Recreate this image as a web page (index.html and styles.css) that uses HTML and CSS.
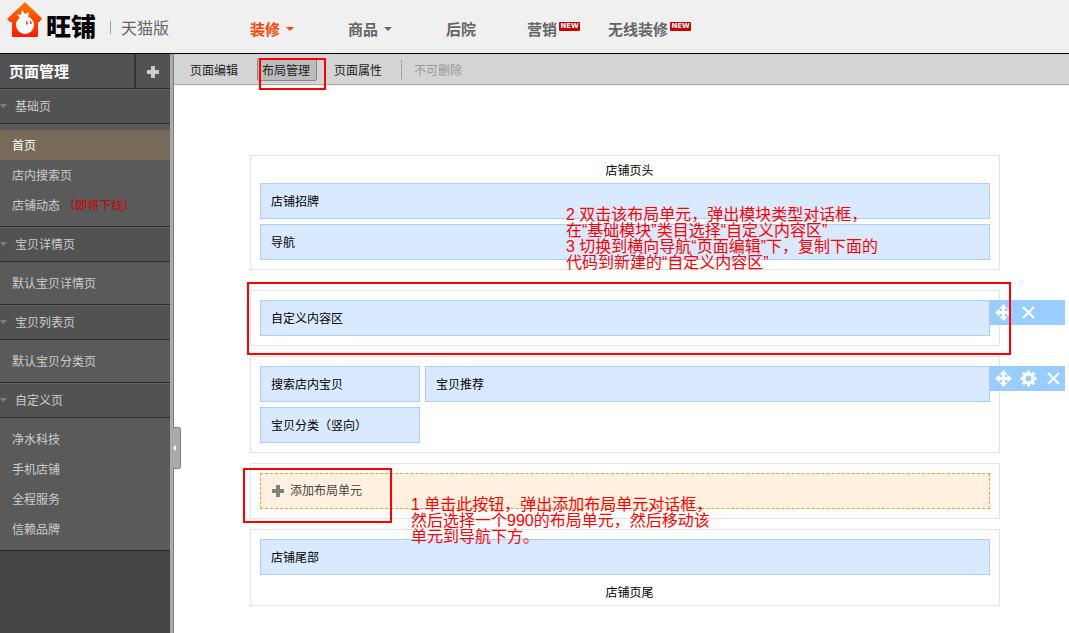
FILE: index.html
```html
<!DOCTYPE html>
<html lang="zh-CN">
<head>
<meta charset="utf-8">
<title>旺铺 天猫版</title>
<link rel="stylesheet" href="styles.css">
</head>
<body>
<svg class="defs" width="0" height="0" aria-hidden="true">
  <symbol id="i-plus" viewBox="0 0 12 12"><path d="M4 0h4v4h4v4H8v4H4V8H0V4h4z"/></symbol>
  <symbol id="i-move" viewBox="0 0 17 17"><path d="M8.500 0l4 4.500h-2.500V7h2.500V4.500L17 8.500l-4.500 4V10H10v2.500h2.500L8.500 17l-4-4.500H7V10H4.500v2.500L0 8.500l4.500-4V7H7V4.500H4.500z"/></symbol>
  <symbol id="i-close" viewBox="0 0 17 17"><path d="M3 3l11 11M14 3L3 14" fill="none" stroke="currentColor" stroke-width="2.200"/></symbol>
  <symbol id="i-gear" viewBox="0 0 17 17"><circle cx="8.500" cy="8.500" r="4.600" fill="none" stroke="currentColor" stroke-width="3.200"/><path d="M8.500 .5v3M8.500 13.500v3M.5 8.500h3M13.500 8.500h3M2.800 2.800l2 2M12.200 12.200l2 2M2.800 14.200l2-2M12.200 4.800l2-2" fill="none" stroke="currentColor" stroke-width="3"/></symbol>
</svg>

<header class="header">
  <div class="brand">
    <svg class="logo" viewBox="0 0 36 36" role="img" aria-label="旺铺">
      <defs><linearGradient id="house" x1="0" y1="0" x2="0" y2="1"><stop offset="0" stop-color="#ff7800"/><stop offset="1" stop-color="#ff1a00"/></linearGradient></defs>
      <path fill="url(#house)" d="M18 0L35 16.500 32.500 20H31v14q0 1-1 1H6q-1 0-1-1V20H3L0 17z"/>
      <circle cx="18" cy="23" r="9" fill="#fff"/>
      <path fill="#fff" d="M13 16l-3-4 4 1 1-5 3 4 4-2-1 5z"/>
      <path d="M19.500 19.500l.7 3M23.500 19l.5 3" stroke="#e32" stroke-width="1.500" fill="none"/>
    </svg>
    <strong class="name">旺铺</strong>
    <span class="edition">天猫版</span>
  </div>
  <nav class="nav">
    <a class="active" href="#">装修<i class="caret"></i></a>
    <a href="#">商品<i class="caret"></i></a>
    <a href="#">后院</a>
    <a href="#">营销<span class="new">NEW</span></a>
    <a href="#">无线装修<span class="new">NEW</span></a>
  </nav>
</header>

<div class="body">
  <aside class="sidebar">
    <div class="side-title">
      <h1>页面管理</h1>
      <button type="button" aria-label="添加页面"><svg class="plus"><use href="#i-plus"/></svg></button>
    </div>
    <h2 class="group">基础页</h2>
    <ul class="pages">
      <li class="current"><a href="#">首页</a></li>
      <li><a href="#">店内搜索页</a></li>
      <li><a href="#">店铺动态 <span class="soon">（即将下线）</span></a></li>
    </ul>
    <h2 class="group">宝贝详情页</h2>
    <ul class="pages"><li><a href="#">默认宝贝详情页</a></li></ul>
    <h2 class="group">宝贝列表页</h2>
    <ul class="pages"><li><a href="#">默认宝贝分类页</a></li></ul>
    <h2 class="group">自定义页</h2>
    <ul class="pages">
      <li><a href="#">净水科技</a></li>
      <li><a href="#">手机店铺</a></li>
      <li><a href="#">全程服务</a></li>
      <li><a href="#">信赖品牌</a></li>
    </ul>
  </aside>
  <div class="rail"><button class="handle" type="button" aria-label="收起"></button></div>

  <main class="main">
    <div class="toolbar">
      <button type="button">页面编辑</button>
      <button type="button" class="pressed">布局管理<span class="mark mark-tab"></span></button>
      <button type="button">页面属性</button>
      <span class="locked">不可删除</span>
    </div>

    <div class="canvas">
      <section class="block block-head">
        <h3>店铺页头</h3>
        <div class="cell">店铺招牌</div>
        <div class="cell">导航</div>
        <p class="note note-head">2 双击该布局单元，弹出模块类型对话框，<br>在“基础模块”类目选择“自定义内容区”<br>3 切换到横向导航“页面编辑”下，复制下面的<br>代码到新建的“自定义内容区”</p>
      </section>

      <section class="block">
        <div class="cell">自定义内容区</div>
        <div class="tools">
          <button type="button" aria-label="移动"><svg><use href="#i-move"/></svg></button>
          <button type="button" aria-label="删除"><svg><use href="#i-close"/></svg></button>
        </div>
        <span class="mark mark-custom"></span>
      </section>

      <section class="block columns">
        <div class="col">
          <div class="cell">搜索店内宝贝</div>
          <div class="cell">宝贝分类（竖向）</div>
        </div>
        <div class="col">
          <div class="cell">宝贝推荐</div>
        </div>
        <div class="tools">
          <button type="button" aria-label="移动"><svg><use href="#i-move"/></svg></button>
          <button type="button" aria-label="设置"><svg><use href="#i-gear"/></svg></button>
          <button type="button" aria-label="删除"><svg><use href="#i-close"/></svg></button>
        </div>
      </section>

      <section class="block block-add">
        <button class="cell add" type="button"><svg class="plus"><use href="#i-plus"/></svg>添加布局单元</button>
        <span class="mark mark-add"></span>
        <p class="note note-add">1 单击此按钮，弹出添加布局单元对话框，<br>然后选择一个990的布局单元，然后移动该<br>单元到导航下方。</p>
      </section>

      <section class="block block-foot">
        <div class="cell">店铺尾部</div>
        <h3>店铺页尾</h3>
      </section>
    </div>
  </main>
</div>
</body>
</html>
```
FILE: styles.css
```css
*, *::before { box-sizing: border-box; }

body {
  margin: 0;
  min-height: 100vh;
  display: flex;
  flex-direction: column;
  background: #fff;
  color: #000;
  font: 12px/18px "Liberation Sans", "Noto Sans CJK SC", sans-serif;
}

h1, h2, h3, p, ul { margin: 0; padding: 0; font-weight: normal; }
ul { list-style: none; }
a { color: inherit; text-decoration: none; }
button { border: 0; padding: 0; background: none; color: inherit; font: inherit; }
svg { display: block; fill: currentColor; }
.defs { position: absolute; }
.plus { width: 12px; height: 12px; }

/* Header */
.header {
  display: flex;
  height: 54px;
  background: #f0f0f0;
  border-bottom: 1px solid #000;
}
.brand { display: flex; width: 250px; padding: 2px 0 0 7px; }
.logo { width: 36px; height: 36px; }
.name { margin: 7px 0 0 3px; font-size: 25px; line-height: 36px; font-weight: 900; }
.edition {
  margin: 19px 0 0 14px;
  padding-left: 10px;
  height: 13px;
  border-left: 1px solid #999;
  color: #666;
  font-size: 16px;
  line-height: 15px;
}
.nav {
  display: flex;
  padding-top: 20px;
  color: #666;
  font-size: 15px;
  font-weight: bold;
  line-height: 20px;
}
.nav a { display: flex; margin-right: 51px; }
.nav a:nth-child(1), .nav a:nth-child(2) { margin-right: 54px; }
.nav a:nth-child(4) { margin-right: 28px; }
.nav .active { color: #f40; }
.caret {
  margin: 7px 0 0 6px;
  height: 4px;
  border: 4px solid transparent;
  border-top-color: currentColor;
  border-bottom: 0;
}
.new {
  width: 21px;
  height: 9px;
  margin: 2px 0 0 2px;
  border-radius: 1px;
  background: #c00;
  color: #fff;
  font: bold 7px/9px "DejaVu Sans", sans-serif;
  text-align: center;
}

/* Sidebar */
.body { display: flex; flex: 1; }
.sidebar { flex: 0 0 170px; background: #444; color: #ccc; }
.side-title {
  display: flex;
  height: 35px;
  background: #525252;
  border-bottom: 1px solid #2a2a2a;
}
.side-title h1 {
  flex: 1;
  padding-left: 9px;
  border-right: 2px solid #333;
  color: #fff;
  font-size: 15px;
  font-weight: bold;
  line-height: 35px;
}
.side-title button { width: 34px; padding: 2px 0 0 11px; }
.group {
  display: flex;
  align-items: center;
  gap: 8px;
  height: 35px;
  background: #525252;
  border-top: 1px solid #626262;
  border-bottom: 1px solid #2a2a2a;
  font-size: 12px;
}
.group::before {
  content: "";
  width: 7px;
  margin-bottom: 2px;
  border-top: 4px solid #808080;
  border-right: 4px solid transparent;
  border-left: 3px solid transparent;
}
.pages { padding: 6px 0; background: #5a5a5a; border-bottom: 1px solid #2a2a2a; }
.pages a { display: block; height: 30px; padding-left: 12px; line-height: 32px; }
.current { background: #786a58; color: #fff; }
.soon { color: #d00000; }
.rail {
  position: relative;
  flex: 0 0 4px;
  background: #aaa;
  border-right: 1px solid #808080;
}
.handle {
  position: absolute;
  top: 373px;
  left: 3px;
  width: 8px;
  height: 42px;
  background: #aaa;
  border: 1px solid #808080;
  border-left: 0;
  border-radius: 0 3px 3px 0;
}
.handle::before {
  content: "";
  display: block;
  width: 3px;
  border: 3px solid transparent;
  border-left: 0;
  border-right-color: #fff;
}

/* Toolbar */
.main { flex: 1; min-width: 0; }
.toolbar {
  display: flex;
  align-items: flex-start;
  height: 32px;
  padding: 4px 0 0 16px;
  background: #d4d4d4;
  border-bottom: 1px solid #eee;
  box-shadow: inset 0 -1px #aaa;
  color: #222;
  line-height: 26px;
}
.toolbar .pressed {
  position: relative;
  width: 60px;
  height: 23px;
  margin: 0 17px 0 19px;
  padding: 0 6px 0 4px;
  border: 1px solid #888;
  border-radius: 2px;
  background: #bbb;
  line-height: 24px;
}
.locked {
  height: 19px;
  margin-left: 19px;
  margin-top: 2px;
  padding-left: 12px;
  border-left: 1px dotted #777;
  color: #999;
  line-height: 22px;
}

/* Layout canvas */
.canvas {
  display: flex;
  flex-direction: column;
  gap: 10px;
  padding: 69px 69px 27px 76px;
}
.block {
  position: relative;
  display: flex;
  flex-direction: column;
  gap: 5px;
  padding: 9px;
  border: 1px solid #e4e4e4;
}
.block h3 { padding-left: 9px; font-size: 12px; text-align: center; }
.block-head { gap: 0; margin-bottom: 10px; padding-top: 0; }
.block-head h3 { height: 27px; line-height: 30px; }
.block-head .cell + .cell { margin-top: 5px; }
.block-foot { gap: 4px; padding-bottom: 0; }
.block-foot h3 { height: 26px; line-height: 28px; }
.cell {
  height: 36px;
  padding-left: 10px;
  background: #d9e9ff;
  border: 1px solid #aad0ff;
  line-height: 37px;
}
.columns { flex-direction: row; }
.col { display: flex; flex: 1; flex-direction: column; gap: 5px; }
.col:first-child { flex: 0 0 160px; }
.add {
  display: flex;
  align-items: center;
  gap: 6px;
  padding-left: 11px;
  background: #fff0e0;
  border: 1px dashed #f93;
  color: #444;
}
.add .plus { color: #80807c; }
.tools {
  position: absolute;
  top: 9px;
  left: calc(100% - 9px);
  display: flex;
  width: 75px;
  height: 25px;
  background: #9cf;
  color: #fff;
}
.tools button { width: 25px; padding: 0 0 0 5px; }
.tools svg { width: 17px; height: 17px; }

/* Annotations */
.mark { position: absolute; z-index: 1; border: 2px solid #f00; pointer-events: none; }
.mark-tab { top: -1px; left: 1px; width: 67px; height: 32px; }
.mark-custom { inset: -9px -12px -10px -4px; }
.mark-add { top: 4px; left: -8px; width: 149px; height: 55px; }
.note {
  position: absolute;
  z-index: 1;
  color: #f00;
  font-size: 16px;
  line-height: 16px;
  white-space: nowrap;
}
.note-head { top: 51px; left: 315px; }
.note-add { top: 33px; left: 160px; }
```
